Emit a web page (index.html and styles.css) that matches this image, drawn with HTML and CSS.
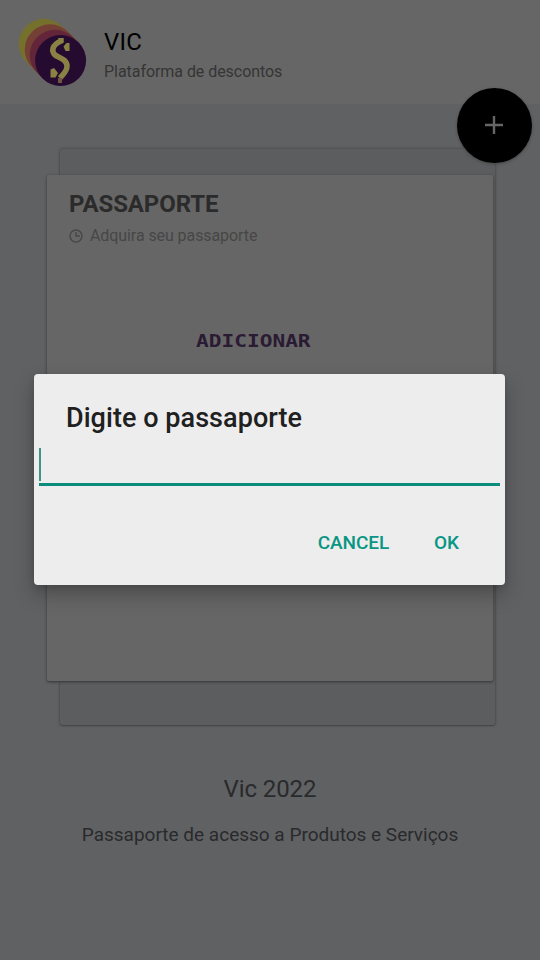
FILE: index.html
```html
<!DOCTYPE html>
<html lang="pt-BR">
<head>
<meta charset="utf-8">
<title>VIC</title>
<link rel="stylesheet" href="styles.css">
</head>
<body>
<div class="screen">
  <header class="header">
    <svg class="logo" width="70" height="70" viewBox="0 0 70 70">
      <g stroke-width="50.500" stroke-linecap="round">
        <path stroke="#76702d" d="M26 26l16 16"/>
        <path stroke="#744036" d="M32 31.500l10 10"/>
        <path stroke="#62253a" d="M37 37l5 5"/>
      </g>
      <circle cx="42.600" cy="42.500" r="25.500" fill="#260b31"/>
      <path fill="none" stroke="#8a8145" stroke-width="5.500" d="M43 20v3c-9 4-10 10-6 14 4 3 12 4 12 11 0 6-4 8-7 12"/>
      <path fill="#8a8145" d="M45.500 28.500l3-3.500h3v8h-4zM32.500 51.500l3.500-1.500 4 5-2.500 4.500h-5z"/>
      <path fill="#755347" d="M40 60h4v5h-4z"/>
    </svg>
    <div class="brand">
      <h1>VIC</h1>
      <p>Plataforma de descontos</p>
    </div>
  </header>
  <main class="stack">
    <section class="card">
      <h2>PASSAPORTE</h2>
      <p class="note">
        <svg width="14" height="14" viewBox="0 0 14 14" fill="none" stroke="#484848" stroke-width="1.500"><circle cx="7" cy="7" r="6"/><path d="M7 3v4h4"/></svg>
        <span>Adquira seu passaporte</span>
      </p>
      <div class="add">ADICIONAR</div>
    </section>
  </main>
  <footer class="caption">
    <p class="year">Vic 2022</p>
    <p class="about">Passaporte de acesso a Produtos e Serviços</p>
  </footer>
  <div class="fab">
    <svg width="20" height="20" viewBox="0 0 20 20" stroke="#666" stroke-width="2.400"><path d="M10 1v18M1 10h18"/></svg>
  </div>
  <div class="dialog">
    <h3>Digite o passaporte</h3>
    <div class="field"><div class="caret"></div></div>
    <div class="actions"><span>CANCEL</span><span>OK</span></div>
  </div>
</div>
</body>
</html>
```
FILE: styles.css
```css
* { box-sizing: border-box; }
body, h1, h2, h3, p { margin: 0; }
body { background: #606163; font-family: Roboto, sans-serif; }
.screen { position: relative; height: 960px; overflow: hidden; background: #606163; }
.header { display: flex; height: 104px; padding: 18px; background: #666; }
.logo { flex: none; }
.brand { padding: 9px 0 0 16px; }
.brand h1 { font-size: 24px; font-weight: 400; line-height: 30px; letter-spacing: .2px; color: #000; }
.brand p { margin-top: 5px; font-size: 16px; line-height: 20px; letter-spacing: -.05px; color: #353535; white-space: nowrap; }
.stack {
  width: 435px; height: 576px; margin: 45px 0 0 60px; padding-top: 26px;
  background: #5b5d5f; border-radius: 2px;
  box-shadow: 0 0 3px #3e3f40, 0 1px 1px #4c4d4e;
}
.card {
  width: 446px; height: 506px; margin-left: -13px; padding: 14px 22px;
  background: #666; border-radius: 2px;
  box-shadow: 0 1px 3px #333;
}
.card h2 { font-size: 24px; font-weight: 700; line-height: 30px; letter-spacing: -.1px; color: #2b2b2b; }
.note { display: flex; align-items: center; gap: 7px; margin-top: 7px; font-size: 16px; line-height: 20px; letter-spacing: -.08px; color: #464646; }
.note svg { margin-top: -1px; }
.add {
  width: max-content; margin: 84px 0 0 126.500px;
  font: 700 18px/22px "DejaVu Sans Mono", monospace;
  color: #2a1a33;
  transform: scaleX(1.175); transform-origin: left;
}
.caption { padding-top: 49px; text-align: center; color: #292a2c; }
.year { font-size: 24px; line-height: 30px; letter-spacing: -.1px; }
.about { margin-top: 18px; font-size: 19px; line-height: 26px; }
.fab {
  position: absolute; left: 457px; top: 88px; width: 75px; height: 75px;
  display: flex; align-items: center; justify-content: center;
  padding: 0 1px 1px 0;
  border-radius: 50%; background: #000; box-shadow: 0 1px 3px #444;
}
.dialog {
  position: absolute; left: 34px; top: 374px; width: 471px; height: 211px;
  padding: 28px 5px 0; border-radius: 4px; background: #ededed;
  box-shadow: 0 10px 20px rgba(0, 0, 0, .25), 0 2px 6px rgba(0, 0, 0, .12);
}
.dialog h3 { padding-left: 27px; font-size: 27px; font-weight: 500; line-height: 32px; letter-spacing: .05px; color: #202020; }
.field { height: 52px; padding-top: 14px; border-bottom: 3px solid #0c8c7b; }
.caret { width: 2px; height: 33px; background: #3f9485; }
.actions {
  display: flex; justify-content: flex-end; gap: 45px; margin: 45px 41px 0 0;
  font-size: 19px; font-weight: 500; line-height: 24px; letter-spacing: -.1px; color: #089684;
}
```
